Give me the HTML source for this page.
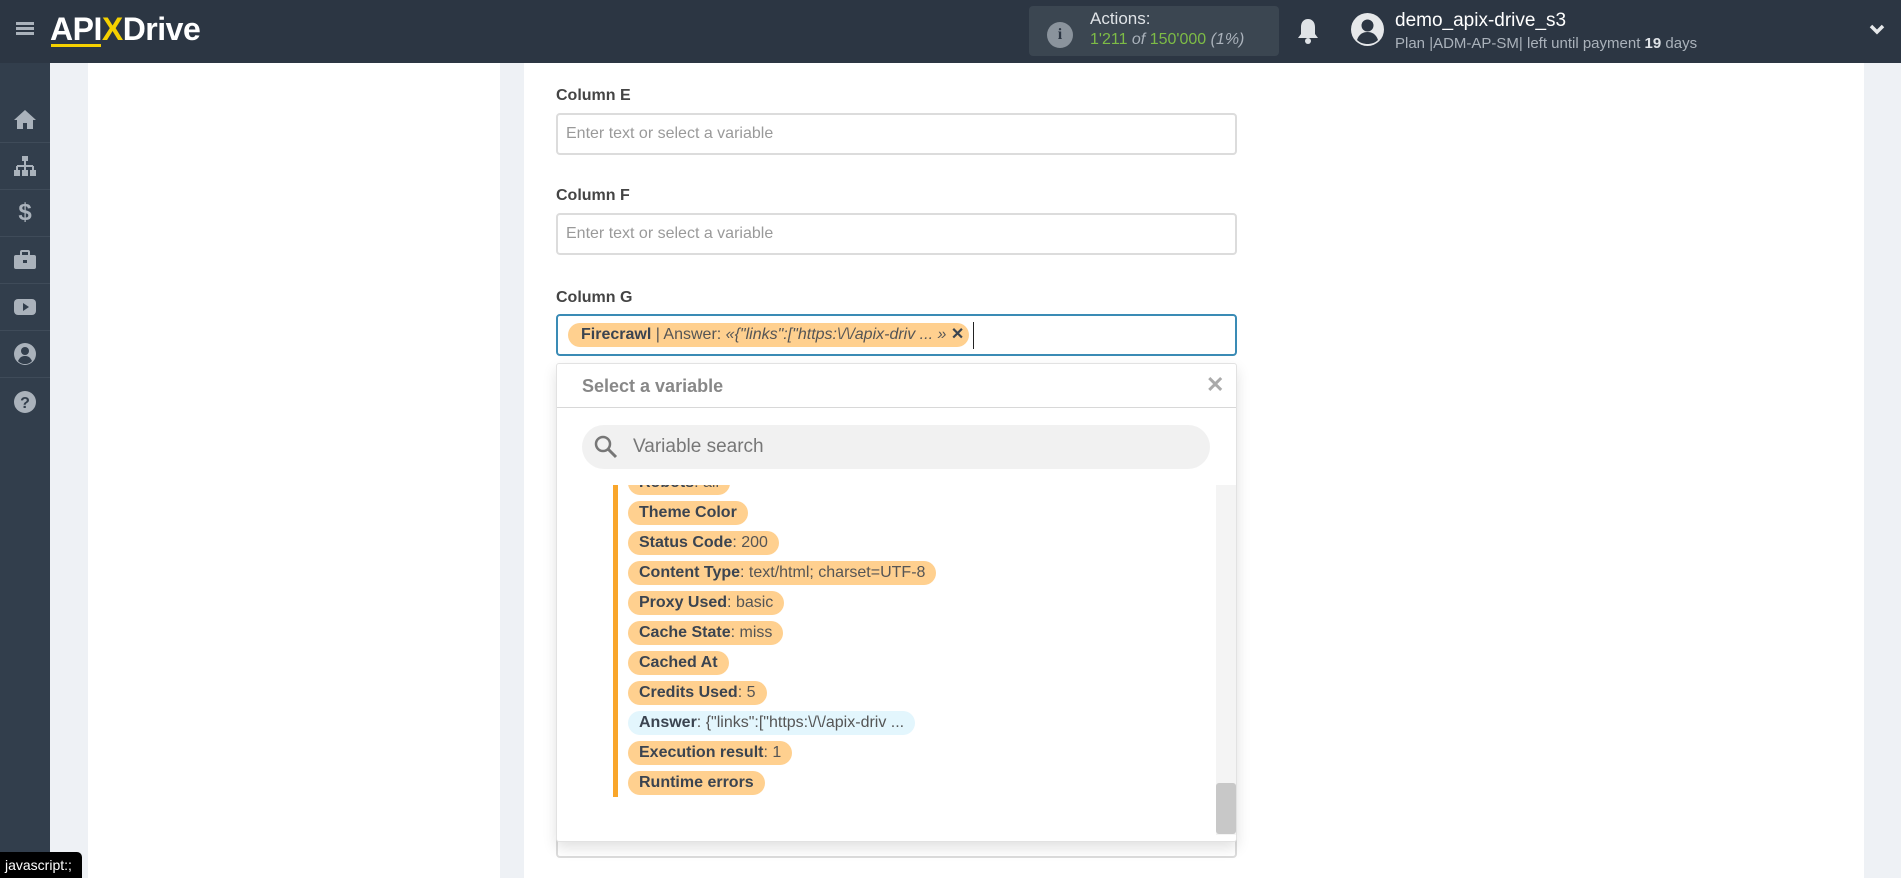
<!DOCTYPE html>
<html><head><meta charset="utf-8"><style>
*{box-sizing:border-box;margin:0;padding:0}
body{width:1901px;height:878px;overflow:hidden;background:#eef1f5;font-family:"Liberation Sans",sans-serif;position:relative;color:#444}
.abs{position:absolute}
#hdr{left:0;top:0;width:1901px;height:63px;background:#2c3643}
#side{left:0;top:63px;width:50px;height:815px;background:#323e4c}
.si{position:absolute;left:0;width:50px;height:47px;border-bottom:1px solid #3f4b59;display:flex;align-items:center;justify-content:center}
.lbl{position:absolute;left:556px;font-size:16px;font-weight:bold;color:#444}
.inp{position:absolute;left:556px;width:681px;height:42px;border:2px solid #dcdcdc;border-radius:4px;background:#fff;font-size:16px;color:#9a9a9a;padding:10px 8px}
.tag{position:absolute;left:628px;height:24px;line-height:24px;border-radius:12px;background:#ffd08f;font-size:16px;padding:0 11px;color:#555;white-space:nowrap}
.tag b{color:#3b4450}
</style></head><body>
<div id="hdr" class="abs">
  <div class="abs" style="left:16px;top:22px;width:18px;height:3px;background:#aab2bb;box-shadow:0 5px 0 #aab2bb,0 10px 0 #aab2bb"></div>
  <div class="abs" style="left:50px;top:11px;font-size:32px;font-weight:bold;color:#fff;letter-spacing:-0.5px">API<span style="color:#f5d100">X</span>Drive</div>
  <div class="abs" style="left:51px;top:44px;width:50px;height:3px;background:#f5d100"></div>
  <div class="abs" style="left:1029px;top:6px;width:250px;height:50px;background:#3b4651;border-radius:4px"></div>
  <div class="abs" style="left:1047px;top:22px;width:26px;height:26px;border-radius:50%;background:#8a939c;color:#2c3643;font-weight:bold;font-size:16px;text-align:center;line-height:26px;font-family:'Liberation Serif',serif">i</div>
  <div class="abs" style="left:1090px;top:9px;font-size:17px;color:#dfe3e7">Actions:</div>
  <div class="abs" style="left:1090px;top:31px;font-size:16px;color:#7dbb46">1'211 <i style="color:#aab2bb">of</i> 150'000 <i style="color:#aab2bb">(1%)</i></div>
  <svg class="abs" style="left:1297px;top:17px" width="22" height="28" viewBox="0 0 22 28"><path d="M11 2c-4 0-7 3-7 8v7l-3 4h20l-3-4v-7c0-5-3-8-7-8z" fill="#dfe3e7"/><circle cx="11" cy="24" r="3" fill="#dfe3e7"/></svg>
  <svg class="abs" style="left:1351px;top:13px" width="33" height="33" viewBox="0 0 33 33"><circle cx="16.5" cy="16.5" r="16.5" fill="#e6e8ea"/><circle cx="16.5" cy="12.5" r="6" fill="#2c3643"/><path d="M6 27c2-6 6-8 10.5-8s8.5 2 10.5 8c-3 3-7 4-10.5 4s-7.5-1-10.5-4z" fill="#2c3643"/></svg>
  <div class="abs" style="left:1395px;top:10px;font-size:19px;color:#fff">demo_apix-drive_s3</div>
  <div class="abs" style="left:1395px;top:35px;font-size:15px;color:#aab2bb">Plan |ADM-AP-SM| left until payment <b style="color:#dfe3e7">19</b> days</div>
  <svg class="abs" style="left:1869px;top:24px" width="16" height="12" viewBox="0 0 16 12"><path d="M2 2l6 6 6-6" stroke="#e6e8ea" stroke-width="3.5" fill="none"/></svg>
</div>
<div id="side" class="abs">
  <div class="si" style="top:33px;border-top:none"><svg width="24" height="22" viewBox="0 0 24 22"><path d="M12 2L1 12h3v9h6v-6h4v6h6v-9h3z" fill="#aab2bb"/></svg></div>
  <div class="si" style="top:80px"><svg width="24" height="22" viewBox="0 0 24 22"><rect x="9" y="1" width="6" height="5" fill="#aab2bb"/><path d="M12 6v5M4 11h16M4 11v4M12 11v4M20 11v4" stroke="#aab2bb" stroke-width="2"/><rect x="1" y="15" width="6" height="6" fill="#aab2bb"/><rect x="9" y="15" width="6" height="6" fill="#aab2bb"/><rect x="17" y="15" width="6" height="6" fill="#aab2bb"/></svg></div>
  <div class="si" style="top:127px;color:#aab2bb;font-size:24px;font-weight:bold">$</div>
  <div class="si" style="top:174px"><svg width="24" height="20" viewBox="0 0 24 20"><rect x="1" y="5" width="22" height="14" rx="2" fill="#aab2bb"/><rect x="8" y="1" width="8" height="5" rx="1" fill="none" stroke="#aab2bb" stroke-width="2"/><rect x="10" y="10" width="4" height="3" fill="#323e4c"/></svg></div>
  <div class="si" style="top:221px"><svg width="24" height="20" viewBox="0 0 24 20"><rect x="1" y="2" width="22" height="16" rx="4" fill="#aab2bb"/><path d="M10 6l6 4-6 4z" fill="#323e4c"/></svg></div>
  <div class="si" style="top:268px"><svg width="24" height="24" viewBox="0 0 24 24"><circle cx="12" cy="12" r="11" fill="#aab2bb"/><circle cx="12" cy="9" r="4" fill="#323e4c"/><path d="M5 19c2-4 4-5 7-5s5 1 7 5c-2 2-4 3-7 3s-5-1-7-3z" fill="#323e4c"/></svg></div>
  <div class="si" style="top:315px;border-bottom:none"><svg width="24" height="24" viewBox="0 0 24 24"><circle cx="12" cy="12" r="11" fill="#aab2bb"/><text x="12" y="18" text-anchor="middle" font-size="16" font-weight="bold" fill="#323e4c" font-family="Liberation Sans">?</text></svg></div>
</div>
<div class="abs" style="left:88px;top:63px;width:412px;height:815px;background:#fff"></div>
<div class="abs" style="left:524px;top:63px;width:1340px;height:815px;background:#fff"></div>

<div class="lbl" style="top:87px">Column E</div>
<div class="inp" style="top:113px">Enter text or select a variable</div>
<div class="lbl" style="top:187px">Column F</div>
<div class="inp" style="top:213px">Enter text or select a variable</div>
<div class="lbl" style="top:289px">Column G</div>
<div class="inp" style="top:314px;border-color:#3a8bb5;padding:0"></div>
<div class="abs" style="left:568px;top:323px;width:401px;height:24px;border-radius:12px;background:#ffd08f;font-size:16px;line-height:24px;padding-left:13px;color:#555;white-space:nowrap"><b style="color:#3b4450">Firecrawl</b> | Answer: <i>«{"links":["https:\/\/apix-driv ... »</i> <b style="color:#3b4450">✕</b></div>
<div class="abs" style="left:973px;top:322px;width:1px;height:27px;background:#222"></div>

<div class="inp" style="top:800px;height:58px"></div>
<div class="abs" style="left:556px;top:363px;width:681px;height:479px;background:#fff;border:1px solid #e2e2e2;border-radius:3px;box-shadow:0 6px 14px rgba(0,0,0,.12)"></div>
<div class="abs" style="left:582px;top:376px;font-size:18px;font-weight:bold;color:#888">Select a variable</div>
<div class="abs" style="left:1206px;top:372px;font-size:22px;font-weight:bold;color:#aaa">✕</div>
<div class="abs" style="left:557px;top:407px;width:679px;height:1px;background:#d8d8d8"></div>
<div class="abs" style="left:582px;top:425px;width:628px;height:44px;border-radius:22px;background:#f1f1f1"></div>
<svg class="abs" style="left:593px;top:434px" width="26" height="26" viewBox="0 0 26 26"><circle cx="10" cy="10" r="7" stroke="#777" stroke-width="2.5" fill="none"/><path d="M15 15l8 8" stroke="#777" stroke-width="3"/></svg>
<div class="abs" style="left:633px;top:436px;font-size:19px;color:#777">Variable search</div>

<div class="abs" style="left:557px;top:485px;width:660px;height:356px;overflow:hidden">
  <div class="abs" style="left:56px;top:0;width:5px;height:312px;background:#f9a62b"></div>
  <div class="tag" style="left:71px;top:-14px"><b>Robots</b>: all</div>
  <div class="tag" style="left:71px;top:16px"><b>Theme Color</b></div>
  <div class="tag" style="left:71px;top:46px"><b>Status Code</b>: 200</div>
  <div class="tag" style="left:71px;top:76px"><b>Content Type</b>: text/html; charset=UTF-8</div>
  <div class="tag" style="left:71px;top:106px"><b>Proxy Used</b>: basic</div>
  <div class="tag" style="left:71px;top:136px"><b>Cache State</b>: miss</div>
  <div class="tag" style="left:71px;top:166px"><b>Cached At</b></div>
  <div class="tag" style="left:71px;top:196px"><b>Credits Used</b>: 5</div>
  <div class="tag" style="left:71px;top:226px;background:#e3f6fd"><b>Answer</b>: {"links":["https:\/\/apix-driv ...</div>
  <div class="tag" style="left:71px;top:256px"><b>Execution result</b>: 1</div>
  <div class="tag" style="left:71px;top:286px"><b>Runtime errors</b></div>
</div>
<div class="abs" style="left:1216px;top:485px;width:20px;height:350px;background:#f4f4f4"></div>
<div class="abs" style="left:1216px;top:783px;width:20px;height:51px;background:#c8c8c8;border-radius:3px"></div>

<div class="abs" style="left:0;top:852px;width:82px;height:26px;background:#000;border-top-right-radius:5px;color:#fff;font-size:14px;line-height:26px;padding-left:5px">javascript:;</div>
</body></html>
